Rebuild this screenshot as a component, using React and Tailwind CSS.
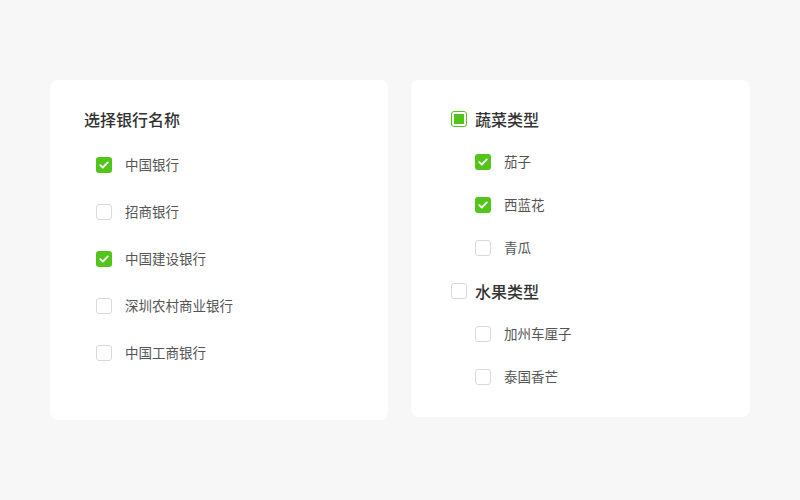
import React, { useState } from 'react';

const Box = ({ state, onClick }) => {
    // state: 'on' | 'off' | 'half'
    if (state === 'on') {
        return (
            <span onClick={onClick} className="w-4 h-4 rounded-[3px] bg-[#52c41a] flex items-center justify-center shrink-0 cursor-pointer">
                <svg width="10" height="8" viewBox="0 0 10 8" fill="none">
                    <path d="M1.2 4.1L3.8 6.5L8.8 1.4" stroke="#fff" strokeWidth="1.8" strokeLinecap="round" strokeLinejoin="round" />
                </svg>
            </span>
        );
    }
    if (state === 'half') {
        return (
            <span onClick={onClick} className="w-4 h-4 rounded-[3px] border border-[#52c41a] bg-white flex items-center justify-center shrink-0 cursor-pointer">
                <span className="w-2.5 h-2.5 bg-[#52c41a]" />
            </span>
        );
    }
    return <span onClick={onClick} className="w-4 h-4 rounded-[3px] border border-[#d9d9d9] bg-white shrink-0 cursor-pointer" />;
};

const banks = ['中国银行', '招商银行', '中国建设银行', '深圳农村商业银行', '中国工商银行'];

const groups = [
    { name: '蔬菜类型', items: ['茄子', '西蓝花', '青瓜'] },
    { name: '水果类型', items: ['加州车厘子', '泰国香芒'] },
];

export default function App() {
    const [picked, setPicked] = useState(['中国银行', '中国建设银行']);
    const [food, setFood] = useState(['茄子', '西蓝花']);

    const toggleBank = (b) =>
        setPicked(picked.includes(b) ? picked.filter((x) => x !== b) : [...picked, b]);

    const toggleFood = (f) =>
        setFood(food.includes(f) ? food.filter((x) => x !== f) : [...food, f]);

    const toggleGroup = (g) => {
        const all = g.items.every((i) => food.includes(i));
        if (all) setFood(food.filter((x) => !g.items.includes(x)));
        else setFood([...food.filter((x) => !g.items.includes(x)), ...g.items]);
    };

    return (
        <div
            className="w-[800px] h-[500px] bg-[#f7f7f7] flex items-start gap-[23px] pl-[50px] pt-[80px]"
            style={{ fontFamily: '"Noto Sans CJK SC", "Noto Sans", sans-serif' }}
        >
            {/* bank list */}
            <div className="w-[338px] h-[340px] bg-white rounded-lg pt-[27px] pl-[34px]">
                <div className="h-6 leading-6 text-base font-medium text-[#333]">选择银行名称</div>
                <div className="mt-[10px] pl-3">
                    {banks.map((b) => (
                        <div key={b} className="h-[47px] flex items-center gap-[13px]">
                            <Box state={picked.includes(b) ? 'on' : 'off'} onClick={() => toggleBank(b)} />
                            <span className="text-[13.5px] text-[#555]">{b}</span>
                        </div>
                    ))}
                </div>
            </div>

            {/* nested groups */}
            <div className="w-[339px] h-[337px] bg-white rounded-lg pt-[17px] pl-[40px]">
                {groups.map((g) => {
                    const n = g.items.filter((i) => food.includes(i)).length;
                    const st = n === 0 ? 'off' : n === g.items.length ? 'on' : 'half';
                    return (
                        <div key={g.name}>
                            <div className="h-[43px] flex items-center gap-2">
                                <Box state={st} onClick={() => toggleGroup(g)} />
                                <span className="text-base font-medium text-[#333]">{g.name}</span>
                            </div>
                            {g.items.map((i) => (
                                <div key={i} className="h-[43px] flex items-center gap-[13px] pl-6">
                                    <Box state={food.includes(i) ? 'on' : 'off'} onClick={() => toggleFood(i)} />
                                    <span className="text-[13.5px] text-[#555]">{i}</span>
                                </div>
                            ))}
                        </div>
                    );
                })}
            </div>
        </div>
    );
}
